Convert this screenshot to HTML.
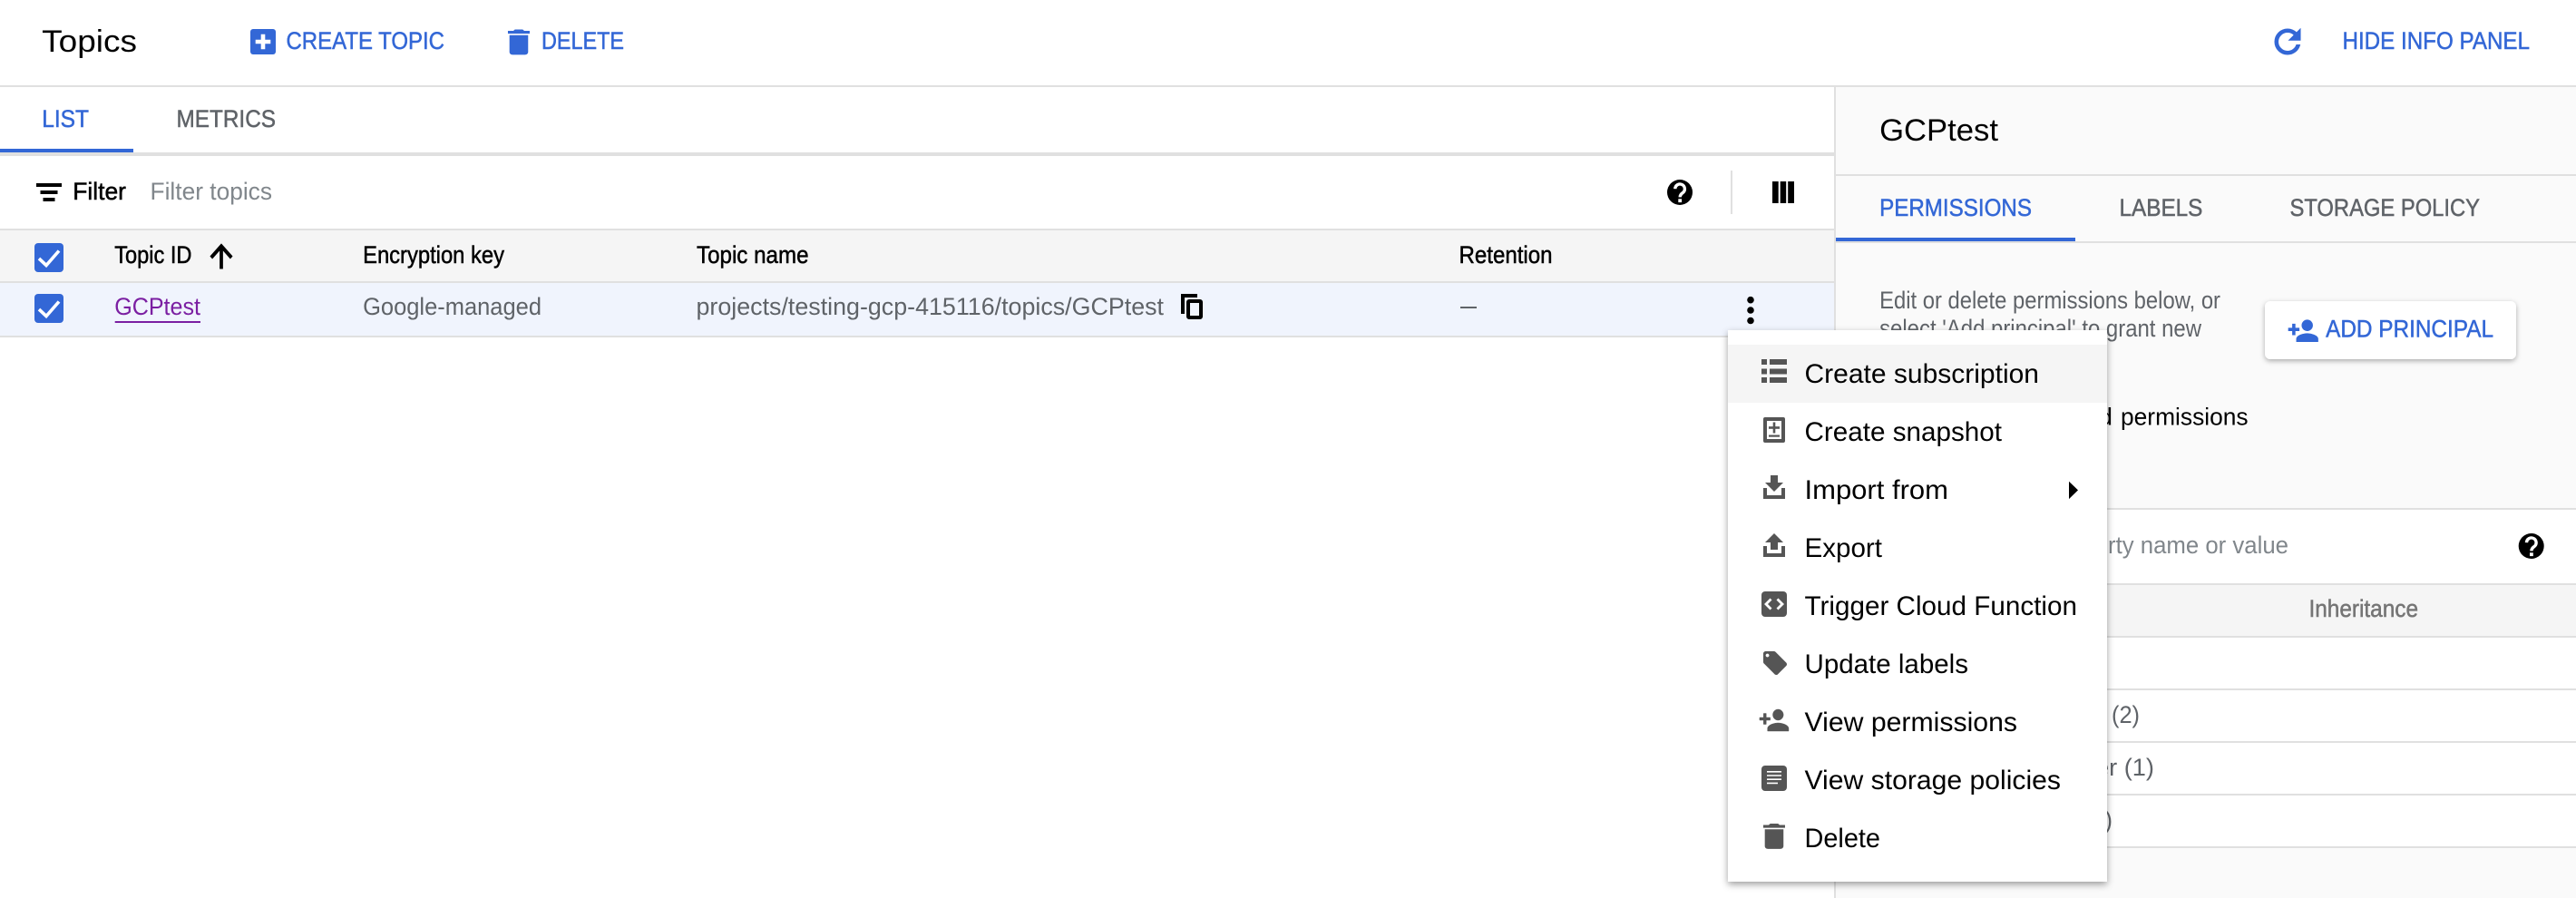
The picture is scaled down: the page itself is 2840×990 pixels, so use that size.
<!DOCTYPE html>
<html lang="en"><head><meta charset="utf-8"><title>Topics</title>
<style>
html,body{margin:0;padding:0;background:#fff;width:2840px;height:990px;overflow:hidden}
svg{display:block}
text{font-family:"Liberation Sans",Arial,sans-serif;white-space:pre}
.b{font-size:26.5px;fill:#3367d6;stroke:#3367d6;stroke-width:.5}
.g{font-size:26.5px;fill:#5f6368;stroke:#5f6368;stroke-width:.5}
.k{font-size:26.5px;fill:#000;stroke:#000;stroke-width:.5}
.t{font-size:26.5px;fill:#5f6368}
.p{font-size:26.5px;fill:#80868b}
.h{font-size:34px;fill:#000}
.n{font-size:30px;fill:#000}
.i{fill:#555}
</style></head><body>
<svg width="2840" height="990" viewBox="0 0 2840 990" xmlns="http://www.w3.org/2000/svg">
<defs>
<filter id="s1" x="-10%" y="-10%" width="120%" height="120%"><feDropShadow dx="0" dy="3" stdDeviation="4" flood-color="#000" flood-opacity=".38"/></filter>
<filter id="s2" x="-10%" y="-20%" width="120%" height="150%"><feDropShadow dx="0" dy="2" stdDeviation="3" flood-color="#000" flood-opacity=".32"/></filter>
</defs>
<rect width="2840" height="990" fill="#fff"/>

<!-- top bar -->
<text class="h" x="46.200" y="57" textLength="104.800" lengthAdjust="spacingAndGlyphs">Topics</text>
<rect x="276" y="32" width="28" height="28" rx="3" fill="#3367d6"/>
<path d="M287.700 37.700h4.600v6h6v4.600h-6v6h-4.600v-6h-6v-4.600h6z" fill="#fff"/>
<text class="b" x="315.500" y="54" textLength="174.500" lengthAdjust="spacingAndGlyphs">CREATE TOPIC</text>
<path transform="translate(551.4,27.85) scale(1.714,1.55)" fill="#3367d6" d="M6 19c0 1.1.9 2 2 2h8c1.1 0 2-.9 2-2V7H6v12zM19 4h-3.5l-1-1h-5l-1 1H5v2h14V4z"/>
<text class="b" x="597" y="54" textLength="91" lengthAdjust="spacingAndGlyphs">DELETE</text>
<path transform="translate(2501,25) scale(1.75)" fill="#3367d6" stroke="#3367d6" stroke-width=".6" d="M17.65 6.35C16.2 4.9 14.21 4 12 4c-4.42 0-7.99 3.58-7.99 8s3.57 8 7.99 8c3.73 0 6.84-2.55 7.73-6h-2.08c-.82 2.33-3.04 4-5.65 4-3.31 0-6-2.69-6-6s2.69-6 6-6c1.66 0 3.14.69 4.22 1.78L13 11h7V4l-2.35 2.35z"/>
<text class="b" x="2582.500" y="54" textLength="206.500" lengthAdjust="spacingAndGlyphs">HIDE INFO PANEL</text>
<rect x="0" y="94" width="2840" height="2" fill="#e0e0e0"/>

<!-- left tabs -->
<text class="b" x="46.200" y="140" textLength="51.800" lengthAdjust="spacingAndGlyphs">LIST</text>
<text class="g" x="194.500" y="140" textLength="109.500" lengthAdjust="spacingAndGlyphs">METRICS</text>
<rect x="0" y="168" width="2022" height="4" fill="#e0e0e0"/>
<rect x="0" y="164" width="147" height="4" fill="#3367d6"/>

<!-- filter row -->
<path d="M40 202h28v4H40zM44.500 210h19v4h-19zM47.500 218h13v4h-13z" fill="#000"/>
<text class="k" x="80.200" y="220" textLength="58.800" lengthAdjust="spacingAndGlyphs">Filter</text>
<text class="p" x="165.500" y="220" textLength="134.500" lengthAdjust="spacingAndGlyphs">Filter topics</text>
<circle cx="1852" cy="212" r="14" fill="#000"/>
<path d="M1846.800 208.200a5.300 5.300 0 1 1 8.600 4.200c-2 1.500-3.200 2.600-3.200 5" fill="none" stroke="#fff" stroke-width="3.400"/>
<rect x="1850.300" y="219.300" width="3.800" height="3.800" fill="#fff"/>
<rect x="1908" y="188" width="2" height="48" fill="#e0e0e0"/>
<path d="M1954 200h6.700v24h-6.700zM1962.700 200h6.500v24h-6.500zM1971.200 200h6.800v24h-6.800z" fill="#000"/>

<!-- table -->
<rect x="0" y="252" width="2022" height="2" fill="#e0e0e0"/>
<rect x="0" y="254" width="2022" height="56" fill="#f5f5f5"/>
<rect x="0" y="310" width="2022" height="2" fill="#e0e0e0"/>
<rect x="0" y="312" width="2022" height="58" fill="#f0f4fd"/>
<rect x="0" y="370" width="2022" height="2" fill="#e0e0e0"/>

<rect x="38" y="268" width="32" height="32" rx="4" fill="#3367d6"/>
<path d="M43 285l8 7.500L65 276.500" fill="none" stroke="#fff" stroke-width="3.600"/>
<rect x="38" y="324" width="32" height="32" rx="4" fill="#3367d6"/>
<path d="M43 341l8 7.500L65 332.500" fill="none" stroke="#fff" stroke-width="3.600"/>

<text class="k" x="126.200" y="290" textLength="85.300" lengthAdjust="spacingAndGlyphs">Topic ID</text>
<path transform="translate(226,262.240) scale(1.5,1.69)" fill="#000" stroke="#000" stroke-width=".5" d="M4 12l1.410 1.410L11 7.830V20h2V7.830l5.580 5.590L20 12l-8-8-8 8z"/>
<text class="k" x="400.100" y="290" textLength="155.900" lengthAdjust="spacingAndGlyphs">Encryption key</text>
<text class="k" x="768" y="290" textLength="123.500" lengthAdjust="spacingAndGlyphs">Topic name</text>
<text class="k" x="1608.500" y="290" textLength="103" lengthAdjust="spacingAndGlyphs">Retention</text>

<text x="126.200" y="347" style="font-size:26.5px;fill:#7b1fa2" textLength="94.800" lengthAdjust="spacingAndGlyphs">GCPtest</text>
<rect x="126.700" y="354" width="94.300" height="2" fill="#7b1fa2"/>
<text class="t" x="400.100" y="347" textLength="196.900" lengthAdjust="spacingAndGlyphs">Google-managed</text>
<text class="t" x="767.500" y="347" textLength="515.500" lengthAdjust="spacingAndGlyphs">projects/testing-gcp-415116/topics/GCPtest</text>
<path d="M1304 346V326h16" fill="none" stroke="#000" stroke-width="4"/>
<rect x="1310" y="332" width="14" height="18" rx="1" fill="none" stroke="#000" stroke-width="4"/>
<rect x="1610" y="338" width="18" height="2" fill="#5f6368"/>
<circle cx="1930" cy="330.700" r="3.800" fill="#000"/><circle cx="1930" cy="342" r="3.800" fill="#000"/><circle cx="1930" cy="353.500" r="3.800" fill="#000"/>

<!-- right panel -->
<rect x="2024" y="96" width="816" height="894" fill="#fafafa"/>
<rect x="2022" y="96" width="2" height="894" fill="#e0e0e0"/>
<text class="h" x="2072.100" y="155" textLength="130.900" lengthAdjust="spacingAndGlyphs">GCPtest</text>
<rect x="2024" y="192" width="816" height="2" fill="#e0e0e0"/>
<text class="b" x="2072.100" y="238" textLength="167.900" lengthAdjust="spacingAndGlyphs">PERMISSIONS</text>
<text class="g" x="2336.500" y="238" textLength="91.900" lengthAdjust="spacingAndGlyphs">LABELS</text>
<text class="g" x="2524.500" y="238" textLength="209.500" lengthAdjust="spacingAndGlyphs">STORAGE POLICY</text>
<rect x="2024" y="266" width="816" height="2" fill="#e0e0e0"/>
<rect x="2024" y="262" width="264" height="4" fill="#3367d6"/>

<text class="t" x="2072.100" y="340" textLength="375.900" lengthAdjust="spacingAndGlyphs">Edit or delete permissions below, or</text>
<text class="t" x="2072.100" y="371" textLength="354.900" lengthAdjust="spacingAndGlyphs">select 'Add principal' to grant new</text>

<rect x="2497" y="332" width="277" height="64" rx="6" fill="#fff" filter="url(#s2)"/>
<path transform="translate(2521.500,346.700) scale(1.48,1.5)" fill="#3367d6" stroke="#3367d6" stroke-width=".4" d="M15 12c2.210 0 4-1.790 4-4s-1.790-4-4-4-4 1.790-4 4 1.790 4 4 4zm-9-2V7H4v3H1v2h3v3h2v-3h3v-2H6zm9 4c-2.670 0-8 1.340-8 4v2h16v-2c0-2.660-5.330-4-8-4z"/>
<text class="b" x="2564.100" y="371.500" textLength="184.900" lengthAdjust="spacingAndGlyphs">ADD PRINCIPAL</text>

<text x="2140" y="468.500" style="font-size:26.5px;fill:#000" textLength="189" lengthAdjust="spacingAndGlyphs">Show inherited</text>
<text x="2338" y="468.500" style="font-size:26.5px;fill:#000" textLength="140.600" lengthAdjust="spacingAndGlyphs">permissions</text>

<rect x="2024" y="560" width="816" height="2" fill="#e0e0e0"/>
<rect x="2024" y="562" width="816" height="81" fill="#fff"/>
<text class="p" x="2195" y="610" textLength="125" lengthAdjust="spacingAndGlyphs">Enter prope</text>
<text class="p" x="2324" y="610" textLength="199" lengthAdjust="spacingAndGlyphs">rty name or value</text>
<circle cx="2790.700" cy="602" r="14" fill="#000"/>
<path d="M2785.500 598.200a5.300 5.300 0 1 1 8.600 4.200c-2 1.500-3.200 2.600-3.200 5" fill="none" stroke="#fff" stroke-width="3.400"/>
<rect x="2789" y="609.300" width="3.800" height="3.800" fill="#fff"/>
<rect x="2024" y="643" width="816" height="2" fill="#e0e0e0"/>
<rect x="2024" y="645" width="816" height="56" fill="#f5f5f5"/>
<text x="2545.500" y="680" style="font-size:26.5px;fill:#757575;stroke:#757575;stroke-width:.5" textLength="120.500" lengthAdjust="spacingAndGlyphs">Inheritance</text>
<rect x="2024" y="701" width="816" height="2" fill="#e0e0e0"/>
<rect x="2024" y="703" width="816" height="231" fill="#fff"/>
<rect x="2024" y="759" width="816" height="2" fill="#e0e0e0"/>
<rect x="2024" y="817" width="816" height="2" fill="#e0e0e0"/>
<rect x="2024" y="875" width="816" height="2" fill="#e0e0e0"/>
<rect x="2024" y="933" width="816" height="2" fill="#e0e0e0"/>
<text class="t" x="2328" y="797" textLength="31" lengthAdjust="spacingAndGlyphs">(2)</text>
<text x="2310" y="855" style="font-size:26.5px;fill:#5f6368" textLength="65" lengthAdjust="spacingAndGlyphs">er (1)</text>
<text class="t" x="2298" y="913" textLength="31" lengthAdjust="spacingAndGlyphs">(1)</text>

<!-- context menu -->
<rect x="1905" y="364" width="418" height="608" fill="#fff" filter="url(#s1)"/>
<rect x="1905" y="380" width="418" height="64" fill="#f5f5f5"/>

<path class="i" d="M1942 396h6v6h-6zM1951 396h19v6h-19zM1942 406.500h6v6h-6zM1951 406.500h19v6h-19zM1942 416h6v6h-6zM1951 416h19v6h-19z"/>
<text class="n" x="1989.500" y="422" textLength="258.500" lengthAdjust="spacingAndGlyphs">Create subscription</text>

<path class="i" fill-rule="evenodd" d="M1946 460h20a2 2 0 0 1 2 2v24a2 2 0 0 1-2 2h-20a2 2 0 0 1-2-2v-24a2 2 0 0 1 2-2zM1948 464v20h16v-20z"/>
<rect x="1954.700" y="465.500" width="2.600" height="12" class="i"/><rect x="1950" y="470.200" width="12" height="2.600" class="i"/><rect x="1950" y="479.500" width="12" height="2.200" class="i"/>
<text class="n" x="1989.500" y="486" textLength="217.500" lengthAdjust="spacingAndGlyphs">Create snapshot</text>

<path class="i" d="M1952 524h8v8h6l-10 10-10-10h6zM1944 538h4v8h16v-8h4v12h-24z"/>
<text class="n" x="1989.500" y="550" textLength="158.500" lengthAdjust="spacingAndGlyphs">Import from</text>
<path d="M2281 530.700l10 9.700-10 9.700z" fill="#000"/>

<path class="i" d="M1956 588l10 10h-6v8h-8v-8h-6zM1944 602h4v8h16v-8h4v12h-24z"/>
<text class="n" x="1989.500" y="614" textLength="85.500" lengthAdjust="spacingAndGlyphs">Export</text>

<rect class="i" x="1942" y="652" width="28" height="28" rx="4"/>
<path d="M1952.500 660.500l-5.500 5.500 5.500 5.500M1959.500 660.500l5.500 5.500-5.500 5.500" fill="none" stroke="#fff" stroke-width="2.800"/>
<text class="n" x="1989.500" y="678" textLength="300.500" lengthAdjust="spacingAndGlyphs">Trigger Cloud Function</text>

<path class="i" transform="translate(1941.400,715.400) scale(1.3)" d="M21.410 11.580l-9-9C12.050 2.220 11.550 2 11 2H4c-1.100 0-2 .9-2 2v7c0 .55.22 1.050.59 1.420l9 9c.36.36.86.58 1.410.58.55 0 1.050-.22 1.410-.59l7-7c.37-.36.59-.86.59-1.410 0-.55-.23-1.060-.59-1.420zM5.500 7C4.670 7 4 6.330 4 5.500S4.670 4 5.500 4 7 4.670 7 5.500 6.330 7 5.500 7z"/>
<text class="n" x="1989.500" y="742" textLength="180.500" lengthAdjust="spacingAndGlyphs">Update labels</text>

<path class="i" transform="translate(1938.500,776) scale(1.455,1.5)" stroke="#555" stroke-width=".3" d="M15 12c2.210 0 4-1.790 4-4s-1.790-4-4-4-4 1.790-4 4 1.790 4 4 4zm-9-2V7H4v3H1v2h3v3h2v-3h3v-2H6zm9 4c-2.670 0-8 1.340-8 4v2h16v-2c0-2.660-5.330-4-8-4z"/>
<text class="n" x="1989.500" y="806" textLength="234.500" lengthAdjust="spacingAndGlyphs">View permissions</text>

<rect class="i" x="1942" y="844" width="28" height="28" rx="4"/>
<path d="M1948 850h16v1.600h-16zM1948 854.200h16v1.600h-16zM1948 858.400h16v1.600h-16zM1948 862.600h12v1.600h-12z" fill="#fff"/>
<text class="n" x="1989.500" y="870" textLength="282.500" lengthAdjust="spacingAndGlyphs">View storage policies</text>

<path class="i" transform="translate(1935.400,903.350) scale(1.714,1.55)" d="M6 19c0 1.100.9 2 2 2h8c1.100 0 2-.9 2-2V7H6v12zM19 4h-3.500l-1-1h-5l-1 1H5v2h14V4z"/>
<text class="n" x="1989.500" y="934" textLength="83.500" lengthAdjust="spacingAndGlyphs">Delete</text>
</svg>
</body></html>
